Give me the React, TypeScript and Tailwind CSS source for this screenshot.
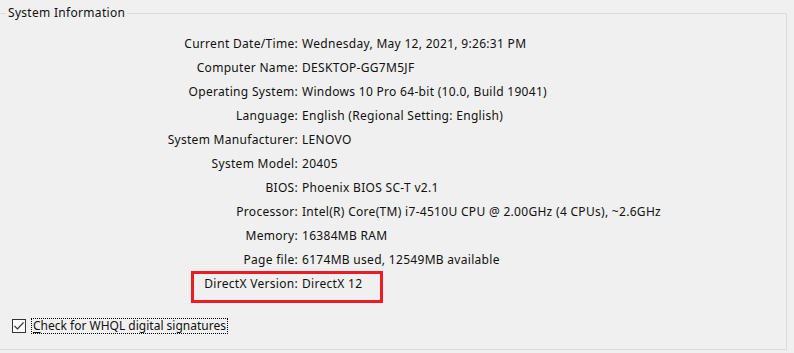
import React from "react";

const rows: [string, string][] = [
  ["Current Date/Time:", "Wednesday, May 12, 2021, 9:26:31 PM"],
  ["Computer Name:", "DESKTOP-GG7M5JF"],
  ["Operating System:", "Windows 10 Pro 64-bit (10.0, Build 19041)"],
  ["Language:", "English (Regional Setting: English)"],
  ["System Manufacturer:", "LENOVO"],
  ["System Model:", "20405"],
  ["BIOS:", "Phoenix BIOS SC-T v2.1"],
  ["Processor:", "Intel(R) Core(TM) i7-4510U CPU @ 2.00GHz (4 CPUs), ~2.6GHz"],
  ["Memory:", "16384MB RAM"],
  ["Page file:", "6174MB used, 12549MB available"],
  ["DirectX Version:", "DirectX 12"],
];

export default function App() {
  return (
    <div
      className="relative w-[794px] h-[353px] overflow-hidden bg-[#f0f0f0] text-[12px] tracking-[0.3px] text-[#111111]"
      style={{ fontFamily: '"Noto Sans", "Open Sans", sans-serif' }}
    >
      <fieldset className="ml-[-4px] mt-[5px] w-[791px] h-[345px] border border-[#dcdcdc] px-0 pb-0">
        <legend className="ml-[9px] px-[2px] leading-[16px]">System Information</legend>
        <div className="pt-[11px] grid grid-cols-[301px_1fr] gap-x-[4px]">
          {rows.map(([k, v]) => (
            <React.Fragment key={k}>
              <div className="text-right leading-[24px] whitespace-nowrap">{k}</div>
              <div className="leading-[24px] whitespace-nowrap">{v}</div>
            </React.Fragment>
          ))}
        </div>
        <div className="mt-[22px] ml-[15px] flex items-center">
          <div className="w-[14px] h-[14px] border border-[#333333] bg-[#fafafa] flex items-center justify-center">
            <svg width="12" height="12" viewBox="0 0 12 12">
              <polyline
                points="1.5,6 4.5,9 10.5,2.5"
                fill="none"
                stroke="#3a3a3a"
                strokeWidth="1.2"
              />
            </svg>
          </div>
          <div className="ml-[5px] h-[16px] px-[1px] border border-dotted border-black flex items-center leading-[14px] tracking-normal">
            <span>
              <span className="underline underline-offset-2">C</span>heck for WHQL digital signatures
            </span>
          </div>
        </div>
      </fieldset>
      <div className="absolute left-[191px] top-[271px] w-[192px] h-[32px] border-[3px] border-[#ed1c24]" />
    </div>
  );
}
